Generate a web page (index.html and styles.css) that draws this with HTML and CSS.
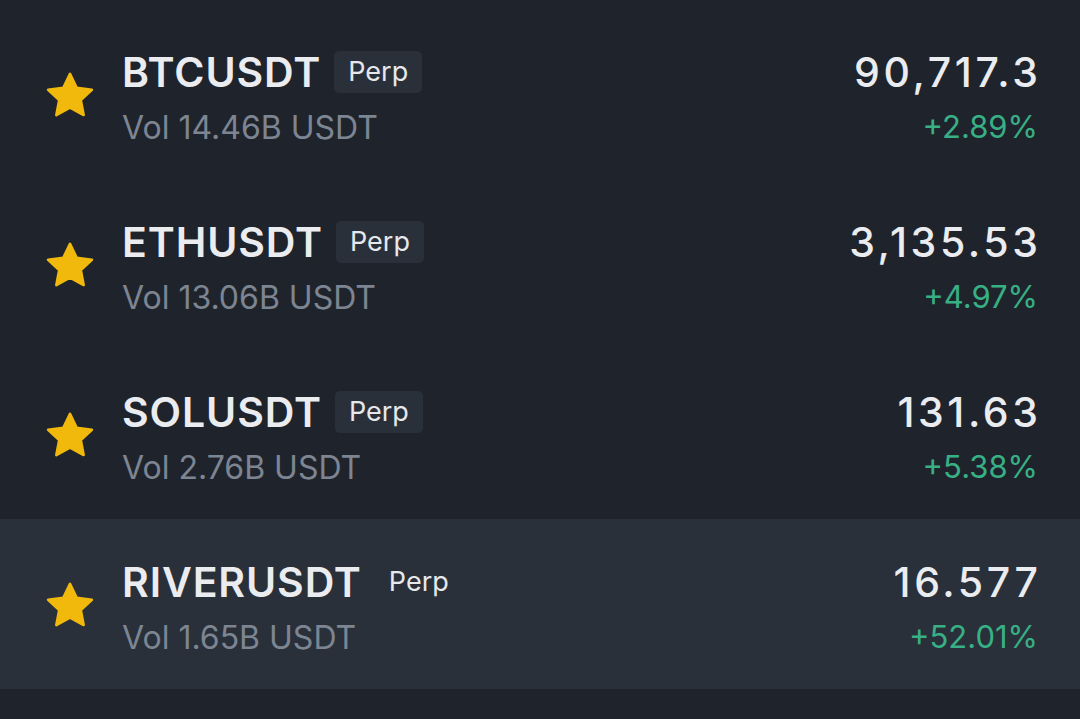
FILE: index.html
```html
<!DOCTYPE html>
<html>
<head>
<meta charset="utf-8">
<link rel="stylesheet" href="styles.css">
</head>
<body>
<div class="list">
  <div class="row">
    <svg class="star" viewBox="0 0 24 24"><path d="M12 1.8l3.1 6.4 7 .9-5.1 4.8 1.3 6.9L12 17.4l-6.3 3.4 1.3-6.9-5.1-4.8 7-.9z"/></svg>
    <div class="info">
      <div class="name-line"><span class="name">BTCUSDT</span><span class="badge">Perp</span></div>
      <div class="vol">Vol 14.46B USDT</div>
    </div>
    <div class="quote">
      <div class="price">90,717.3</div>
      <div class="change">+2.89%</div>
    </div>
  </div>
  <div class="row">
    <svg class="star" viewBox="0 0 24 24"><path d="M12 1.8l3.1 6.4 7 .9-5.1 4.8 1.3 6.9L12 17.4l-6.3 3.4 1.3-6.9-5.1-4.8 7-.9z"/></svg>
    <div class="info">
      <div class="name-line"><span class="name">ETHUSDT</span><span class="badge">Perp</span></div>
      <div class="vol">Vol 13.06B USDT</div>
    </div>
    <div class="quote">
      <div class="price">3,135.53</div>
      <div class="change">+4.97%</div>
    </div>
  </div>
  <div class="row">
    <svg class="star" viewBox="0 0 24 24"><path d="M12 1.8l3.1 6.4 7 .9-5.1 4.8 1.3 6.9L12 17.4l-6.3 3.4 1.3-6.9-5.1-4.8 7-.9z"/></svg>
    <div class="info">
      <div class="name-line"><span class="name">SOLUSDT</span><span class="badge">Perp</span></div>
      <div class="vol">Vol 2.76B USDT</div>
    </div>
    <div class="quote">
      <div class="price">131.63</div>
      <div class="change">+5.38%</div>
    </div>
  </div>
  <div class="row active">
    <svg class="star" viewBox="0 0 24 24"><path d="M12 1.8l3.1 6.4 7 .9-5.1 4.8 1.3 6.9L12 17.4l-6.3 3.4 1.3-6.9-5.1-4.8 7-.9z"/></svg>
    <div class="info">
      <div class="name-line"><span class="name">RIVERUSDT</span><span class="badge">Perp</span></div>
      <div class="vol">Vol 1.65B USDT</div>
    </div>
    <div class="quote">
      <div class="price">16.577</div>
      <div class="change">+52.01%</div>
    </div>
  </div>
</div>
</body>
</html>
```
FILE: styles.css
```css
html, body {
  margin: 0;
  padding: 0;
  background: #1f242c;
  width: 1080px;
  height: 719px;
  overflow: hidden;
  font-family: Inter, "Open Sans", sans-serif;
}
.list {
  padding-top: 9px;
}
.row {
  height: 170px;
  display: flex;
  align-items: flex-start;
  padding: 38px 42px 0 44px;
  box-sizing: border-box;
}
.row.active {
  background: #29303a;
}
.star {
  width: 52px;
  height: 52px;
  margin-top: 23px;
  fill: #f0b90b;
  stroke: #f0b90b;
  stroke-width: 1.2;
  stroke-linejoin: round;
  margin-right: 26px;
  flex: none;
}
.info {
  flex: 1;
  display: flex;
  flex-direction: column;
}
.name-line {
  display: flex;
  align-items: center;
  height: 50px;
}
.name {
  font-size: 41px;
  font-weight: 600;
  color: #eaecef;
  letter-spacing: 0.9px;
}
.badge {
  margin-left: 13px;
  background: #29303a;
  border-radius: 5px;
  color: #e6e8eb;
  font-size: 27px;
  padding: 4px 14px 5px;
}
.vol {
  margin-top: 11px;
  font-size: 32px;
  color: #7d8592;
}
.quote {
  display: flex;
  flex-direction: column;
  align-items: flex-end;
}
.price {
  font-size: 41px;
  font-weight: 500;
  color: #eaecef;
  height: 50px;
  line-height: 50px;
  letter-spacing: 3.6px;
  margin-right: -3.6px;
}
.change {
  margin-top: 11px;
  font-size: 31px;
  color: #38b085;
}
```
